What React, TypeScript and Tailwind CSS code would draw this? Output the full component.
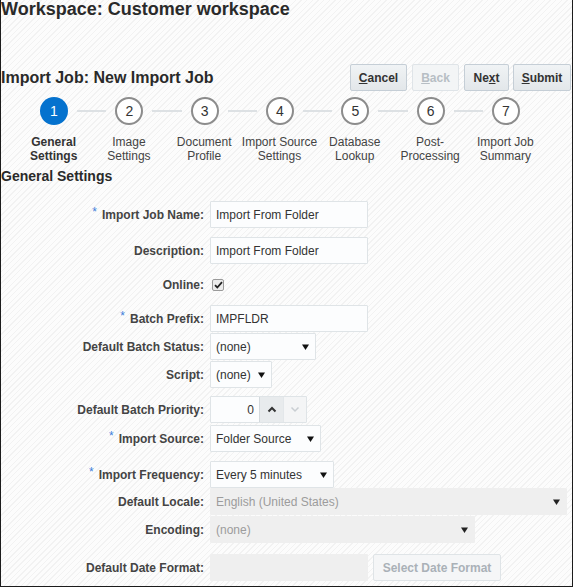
import type { ReactNode } from 'react';

const steps = [
  ['General', 'Settings'],
  ['Image', 'Settings'],
  ['Document', 'Profile'],
  ['Import Source', 'Settings'],
  ['Database', 'Lookup'],
  ['Post-', 'Processing'],
  ['Import Job', 'Summary'],
];

function Arrow({ light }: { light?: boolean }) {
  return (
    <svg width="7" height="6" viewBox="0 0 7 6" className="shrink-0">
      <path d="M0 0.5 H7 L3.5 6 Z" fill={light ? '#222' : '#111'} />
    </svg>
  );
}

function Row({
  label,
  required,
  mt,
  children,
}: {
  label: string;
  required?: boolean;
  mt: string;
  children: ReactNode;
}) {
  return (
    <div className={`flex items-center ${mt}`}>
      <div className="w-[203px] shrink-0 text-right text-[12px] font-bold text-[#444] whitespace-nowrap">
        {required && <span className="relative -top-[3px] mr-[5px] font-normal text-[#3f7fdb]">*</span>}
        {label}:
      </div>
      <div className="ml-[6px] flex items-center">{children}</div>
    </div>
  );
}

function TextBox({ value, w }: { value: string; w: string }) {
  return (
    <div className={`${w} h-[27px] flex items-center pl-[5px] bg-[#fcfdfe] border border-[#dfe4e7] rounded-[1px] text-[12px] text-[#333]`}>
      {value}
    </div>
  );
}

function Select({ value, w, disabled }: { value: string; w: string; disabled?: boolean }) {
  return (
    <div
      className={`${w} h-[27px] flex items-center justify-between pl-[5px] pr-[6px] rounded-[1px] text-[12px] border ${
        disabled ? 'bg-[#efefef] border-[#efefef] text-[#9c9c9c]' : 'bg-[#fcfdfe] border-[#dfe4e7] text-[#333]'
      }`}
    >
      <span>{value}</span>
      <Arrow light={disabled} />
    </div>
  );
}

function Btn({ children, disabled, w, ml }: { children: ReactNode; disabled?: boolean; w: string; ml: string }) {
  return (
    <div
      className={`${w} ${ml} h-[27px] flex items-center justify-center rounded-[2px] border text-[12px] font-bold ${
        disabled
          ? 'bg-[#f3f5f6] border-[#dfe4e8] text-[#b7bec4]'
          : 'bg-gradient-to-b from-[#f0f3f5] to-[#e3e7ea] border-[#c5ced6] text-[#333]'
      }`}
    >
      {children}
    </div>
  );
}

export default function App() {
  return (
    <div className="w-[573px] h-[587px] overflow-hidden border-x border-b border-[#1c1c1c] bg-[repeating-linear-gradient(135deg,#f2f2f2_0px,#f2f2f2_1px,#fcfcfc_1px,#fcfcfc_4px)] font-['Liberation_Sans',Arial,sans-serif] text-[#333]">
      <h1 className="h-[18px] text-[18px] leading-[18px] font-bold text-[#2a2a2a] whitespace-nowrap">
        Workspace: Customer workspace
      </h1>

      <div className="mt-[46px] flex items-center justify-between pr-[1px]">
        <h2 className="text-[16px] leading-[18px] font-bold text-[#2a2a2a]">Import Job: New Import Job</h2>
        <div className="flex">
          <Btn w="w-[57px]" ml="ml-0">
            <span className="underline">C</span>ancel
          </Btn>
          <Btn w="w-[47px]" ml="ml-[5px]" disabled>
            <span className="underline">B</span>ack
          </Btn>
          <Btn w="w-[45px]" ml="ml-[5px]">
            Ne<span className="underline">x</span>t
          </Btn>
          <Btn w="w-[58px]" ml="ml-[4px]">
            <span className="underline">S</span>ubmit
          </Btn>
        </div>
      </div>

      <div className="mt-[6px] ml-[39px] w-[480px] flex items-center">
        {steps.map((_, i) => (
          <div key={i} className={`flex items-center ${i < steps.length - 1 ? 'flex-1' : ''}`}>
            <div
              className={`w-[28px] h-[28px] shrink-0 rounded-full flex items-center justify-center text-[14px] ${
                i === 0 ? 'bg-[#0572ce] text-white' : 'bg-white border-2 border-[#8c8c8c] text-[#333]'
              }`}
            >
              {i + 1}
            </div>
            {i < steps.length - 1 && <div className="flex-1 mx-[9px] h-[2px] bg-[#dde1e4]" />}
          </div>
        ))}
      </div>

      <div className="mt-[10px] ml-[15px] w-[527px] grid grid-cols-7">
        {steps.map(([a, b], i) => (
          <div
            key={i}
            className={`text-center text-[12px] leading-[14px] whitespace-nowrap ${i === 0 ? 'font-bold text-[#333]' : 'text-[#444]'}`}
          >
            {a}
            <br />
            {b}
          </div>
        ))}
      </div>

      <h3 className="mt-[5px] text-[14px] leading-[16px] font-bold text-[#2a2a2a]">General Settings</h3>

      <div className="flex flex-col">
        <Row label="Import Job Name" required mt="mt-[17px]">
          <TextBox value="Import From Folder" w="w-[158px]" />
        </Row>
        <Row label="Description" mt="mt-[9px]">
          <TextBox value="Import From Folder" w="w-[158px]" />
        </Row>
        <Row label="Online" mt="mt-[7px]">
          <div className="h-[27px] flex items-center">
            <div className="ml-[2px] w-[12px] h-[12px] rounded-[2px] border border-[#9a9a9a] bg-[#ececec] flex items-center justify-center">
              <svg width="9" height="8" viewBox="0 0 9 8">
                <path d="M1 4.2 L3.3 6.5 L8 1.2" fill="none" stroke="#222" strokeWidth="1.8" />
              </svg>
            </div>
          </div>
        </Row>
        <Row label="Batch Prefix" required mt="mt-[7px]">
          <TextBox value="IMPFLDR" w="w-[158px]" />
        </Row>
        <Row label="Default Batch Status" mt="mt-[1px]">
          <Select value="(none)" w="w-[106px]" />
        </Row>
        <Row label="Script" mt="mt-[1px]">
          <Select value="(none)" w="w-[62px]" />
        </Row>
        <Row label="Default Batch Priority" mt="mt-[8px]">
          <div className="h-[27px] flex border border-[#dfe4e7] rounded-[1px]">
            <div className="w-[48px] flex items-center justify-end pr-[5px] bg-[#fcfdfe] text-[12px] text-[#333]">0</div>
            <div className="w-[24px] flex items-center justify-center bg-[#e8ebed] border-l border-[#d3d9dd]">
              <svg width="10" height="7" viewBox="0 0 10 7">
                <path d="M1.5 5.5 L5 2 L8.5 5.5" fill="none" stroke="#333" strokeWidth="2" />
              </svg>
            </div>
            <div className="w-[23px] flex items-center justify-center bg-[#f4f5f6] border-l border-[#e3e7ea]">
              <svg width="10" height="7" viewBox="0 0 10 7">
                <path d="M1.5 1.5 L5 5 L8.5 1.5" fill="none" stroke="#c9ced2" strokeWidth="1.5" />
              </svg>
            </div>
          </div>
        </Row>
        <Row label="Import Source" required mt="mt-[2px]">
          <Select value="Folder Source" w="w-[111px]" />
        </Row>
        <Row label="Import Frequency" required mt="mt-[9px]">
          <Select value="Every 5 minutes" w="w-[124px]" />
        </Row>
        <Row label="Default Locale" mt="mt-0">
          <Select value="English (United States)" w="w-[357px]" disabled />
        </Row>
        <Row label="Encoding" mt="mt-[1px]">
          <Select value="(none)" w="w-[265px]" disabled />
        </Row>
        <Row label="Default Date Format" mt="mt-[11px]">
          <div className="w-[158px] h-[27px] bg-[#efefef] rounded-[1px]" />
          <div className="ml-[5px] w-[128px] h-[27px] flex items-center justify-center bg-[#f5f6f7] border border-[#dfe4e7] rounded-[2px] text-[12px] font-bold text-[#aab1b7]">
            Select Date Format
          </div>
        </Row>
      </div>
    </div>
  );
}
